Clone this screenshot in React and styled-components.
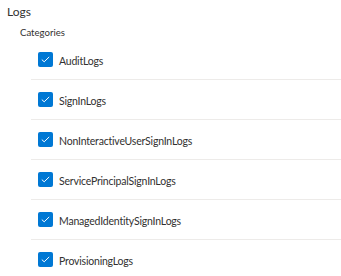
import React from 'react'
import styled, { createGlobalStyle } from 'styled-components'

const GlobalStyle = createGlobalStyle`
    body {
        margin: 0;
        background: #ffffff;
        font-family: "Lato", "Noto Sans", sans-serif;
        color: #323130;
    }
`

const Panel = styled.div`
    width: 341px;
    height: 276px;
    overflow: hidden;
    display: flex;
    flex-direction: column;
`

const Title = styled.h2`
    margin: 0;
    padding: 4px 0 0 7px;
    height: 16px;
    font-size: 12px;
    font-weight: 400;
    line-height: 16px;
    color: #323130;
`

const Subtitle = styled.h3`
    margin: 0;
    padding: 6px 0 0 20px;
    height: 14px;
    font-size: 9.6px;
    font-weight: 400;
    line-height: 14px;
    color: #323130;
`

const List = styled.ul`
    list-style: none;
    margin: 0;
    padding: 0;
    margin-left: 31px;
    display: flex;
    flex-direction: column;
`

const Row = styled.li`
    display: flex;
    align-items: center;
    gap: 6px;
    height: 39px;
    padding-left: 7px;
    border-bottom: 1px solid ${p => (p.last ? 'transparent' : '#edebe9')};
`

const Box = styled.span`
    width: 15px;
    height: 15px;
    border-radius: 2px;
    background: #0078d4;
    display: flex;
    align-items: center;
    justify-content: center;
    flex-shrink: 0;
`

const Label = styled.span`
    padding-top: 3.5px;
    font-size: 10.5px;
    line-height: 14px;
    letter-spacing: -0.2px;
    color: #323130;
`

const categories = [
    'AuditLogs',
    'SignInLogs',
    'NonInteractiveUserSignInLogs',
    'ServicePrincipalSignInLogs',
    'ManagedIdentitySignInLogs',
    'ProvisioningLogs',
]

function Check(){
    return(
        <svg width="9" height="7" viewBox="0 0 9 7" fill="none">
            <path d="M0.8 3.6 L3.2 5.8 L8.2 0.9" stroke="#ffffff" strokeWidth="1" />
        </svg>
    )
}

export default function App(){
    return(
        <Panel>
            <GlobalStyle />
            <Title>Logs</Title>
            <Subtitle>Categories</Subtitle>
            <List>
                {categories.map((name, i) => (
                    <Row key={name} last={i === categories.length - 1}>
                        <Box><Check /></Box>
                        <Label>{name}</Label>
                    </Row>
                ))}
            </List>
        </Panel>
    )
}
